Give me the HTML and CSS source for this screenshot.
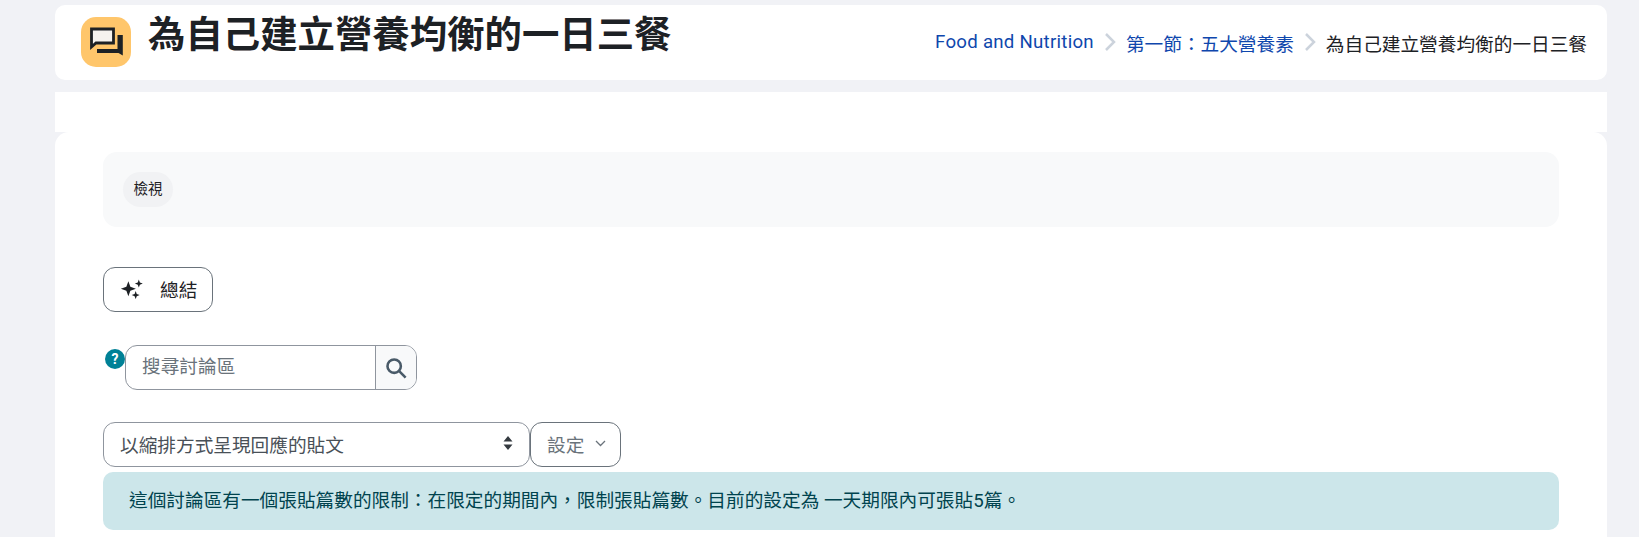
FILE: index.html
```html
<!DOCTYPE html>
<html lang="zh-Hant">
<head>
  <meta charset="UTF-8">
  <title>為自己建立營養均衡的一日三餐</title>
  <link rel="stylesheet" href="styles.css">
</head>
<body>

<header class="page-head">
  <div class="head-left">
    <div class="activity-icon">
      <svg width="50" height="50" viewBox="0 0 50 50">
        <path d="M36.500 18H41.800V38.500L37.500 36H16V32H36.500z" fill="#1d2125"/>
        <path d="M10.500 12H32.500V26H15L10.500 30z" fill="#f6f3ee" stroke="#1d2125" stroke-width="2.800"/>
      </svg>
    </div>
    <h1>為自己建立營養均衡的一日三餐</h1>
  </div>
  <nav class="breadcrumb">
    <a class="course-link" href="#">Food and Nutrition</a>
    <svg class="crumb-sep" width="12" height="18" viewBox="0 0 12 18" fill="none" stroke="#ccd3dc" stroke-width="2.500"><path d="M2 1l8 8-8 8"/></svg>
    <a href="#">第一節&#xFF1A;五大營養素</a>
    <svg class="crumb-sep" width="12" height="18" viewBox="0 0 12 18" fill="none" stroke="#ccd3dc" stroke-width="2.500"><path d="M2 1l8 8-8 8"/></svg>
    <span>為自己建立營養均衡的一日三餐</span>
  </nav>
</header>

<div class="band"></div>

<main class="content">
  <div class="tabs-box">
    <span class="tab-pill">檢視</span>
  </div>

  <button class="summary-btn">
    <svg width="23" height="21" viewBox="0 0 22 20" fill="#1d2125">
      <path d="M8 3l1.900 5.300 5.300 1.900-5.300 1.900-1.900 5.300-1.900-5.300-5.300-1.900 5.300-1.900z"/>
      <path d="M18 1.500l1 2.800 2.800 1-2.800 1-1 2.800-1-2.800-2.800-1 2.800-1z"/>
      <path d="M15 12.500l1 2.800 2.800 1-2.800 1-1 2.800-1-2.800-2.800-1 2.800-1z"/>
    </svg>
    <span>總結</span>
  </button>

  <div class="search-row">
    <span class="help-icon">?</span>
    <div class="search-box">
      <span class="search-input">搜尋討論區</span>
      <span class="search-btn">
        <svg width="22" height="22" viewBox="0 0 24 24" fill="none" stroke="#495a68" stroke-width="2.800"><circle cx="10" cy="10" r="7.300"/><path d="M15.500 15.500l7 7"/></svg>
      </span>
    </div>
  </div>

  <div class="mode-row">
    <div class="mode-select">
      <span>以縮排方式呈現回應的貼文</span>
      <svg width="10" height="14" viewBox="0 0 10 14" fill="#343a40"><path d="M5 0l4.500 5.500h-9zM5 14L.5 8.500h9z"/></svg>
    </div>
    <div class="settings-btn">
      <span>設定</span>
      <svg width="11" height="7" viewBox="0 0 11 7" fill="none" stroke="#6a737b" stroke-width="1.300"><path d="M1 1l4.500 4.500L10 1"/></svg>
    </div>
  </div>

  <div class="alert-info">這個討論區有一個張貼篇數的限制&#xFF1A;在限定的期間內&#xFF0C;限制張貼篇數。目前的設定為 一天期限內可張貼5篇。</div>
</main>

</body>
</html>
```

FILE: styles.css
```css
html, body {
  height: 100%;
}

body {
  margin: 0;
  padding: 5px 32px 0 55px;
  box-sizing: border-box;
  overflow: hidden;
  background: #f1f2f6;
  color: #1d2125;
  font-family: Roboto, "Noto Sans CJK TC", sans-serif;
  font-size: 18.660px;
}

.page-head {
  display: flex;
  justify-content: space-between;
  height: 75px;
  box-sizing: border-box;
  padding: 12px 20px 0 26px;
  background: white;
  border-radius: 10px;
}

.head-left {
  display: flex;
  align-items: flex-start;
  gap: 17px;
}

.activity-icon {
  display: flex;
  align-items: center;
  justify-content: center;
  width: 50px;
  height: 50px;
  border-radius: 15px;
  background: #ffc66b;
}

h1 {
  margin: 0;
  padding-top: 1px;
  font-size: 37.400px;
  font-weight: 700;
  line-height: 34px;
}

.breadcrumb {
  display: flex;
  align-items: center;
  gap: 10px;
  height: 50px;
}

.breadcrumb a {
  color: #0f47ad;
  text-decoration: none;
}

.course-link {
  letter-spacing: 0.25px;
}

.band {
  height: 40px;
  margin-top: 12px;
  background: white;
}

.content {
  height: 405px;
  box-sizing: border-box;
  padding: 20px 48px;
  background: white;
  border-radius: 14px 14px 0 0;
}

.tabs-box {
  height: 75px;
  box-sizing: border-box;
  padding: 20px;
  background: #f8f9fa;
  border-radius: 14px;
}

.tab-pill {
  display: inline-block;
  width: 50px;
  height: 35px;
  line-height: 35px;
  text-align: center;
  font-size: 14.500px;
  background: #f1f2f4;
  border-radius: 18px;
}

.summary-btn {
  display: flex;
  align-items: center;
  gap: 17px;
  width: 110px;
  height: 45px;
  margin-top: 40px;
  padding: 0 0 2px 16px;
  background: white;
  color: #1d2125;
  border: 1px solid #6a737b;
  border-radius: 12px;
  font-family: inherit;
  font-size: 18.660px;
}

.search-row {
  display: flex;
  align-items: flex-start;
  margin-top: 33px;
}

.help-icon {
  width: 20px;
  height: 20px;
  margin: 4px 0 0 2px;
  border-radius: 50%;
  background: #008196;
  color: white;
  font-size: 14px;
  font-weight: 700;
  line-height: 20px;
  text-align: center;
}

.search-box {
  display: flex;
  width: 292px;
  height: 45px;
  box-sizing: border-box;
  border: 1px solid #8f959e;
  border-radius: 12px;
  overflow: hidden;
}

.search-input {
  flex: 1;
  padding-left: 16px;
  line-height: 43px;
  color: #6a737b;
}

.search-btn {
  display: flex;
  align-items: center;
  justify-content: center;
  width: 40px;
  background: #f8f9fa;
  border-left: 1px solid #8f959e;
}

.mode-row {
  display: flex;
  align-items: flex-start;
  margin-top: 32px;
}

.mode-select {
  display: flex;
  align-items: center;
  justify-content: space-between;
  width: 427px;
  height: 45px;
  box-sizing: border-box;
  padding: 0 16px 3px;
  border: 1px solid #8f959e;
  border-radius: 12px;
  color: #495057;
}

.settings-btn {
  display: flex;
  align-items: center;
  gap: 11px;
  width: 91px;
  height: 45px;
  box-sizing: border-box;
  padding: 0 0 3px 16px;
  border: 1px solid #6a737b;
  border-radius: 12px;
  color: #6a737b;
}

.alert-info {
  height: 58px;
  box-sizing: border-box;
  margin-top: 5px;
  padding: 0 26px;
  line-height: 58px;
  background: #cce6ea;
  color: #00434e;
  border-radius: 10px;
}
```
